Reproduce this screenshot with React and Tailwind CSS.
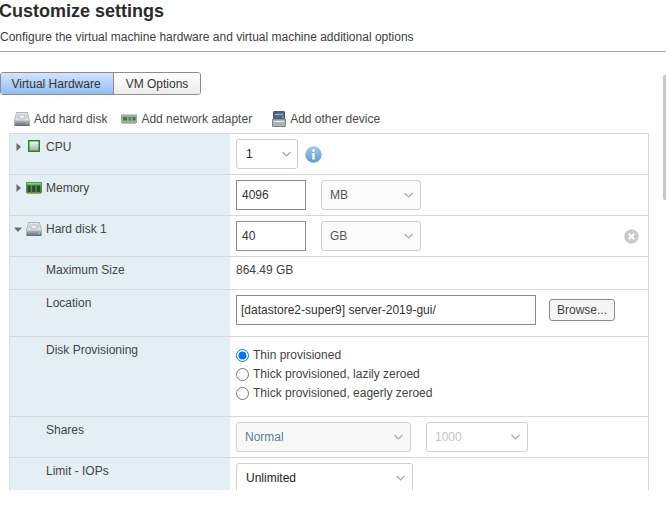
const F = { fontFamily: '"Liberation Sans", Arial, sans-serif' };

function Chevron() {
  return (
    <svg width="9" height="6" viewBox="0 0 9 6">
      <path d="M0.5 1 L4.5 5 L8.5 1" fill="none" stroke="#ababab" strokeWidth="1.2" />
    </svg>
  );
}

function Select({ w, text, textClass = "text-[#565656]", bg = "bg-white", pl = "pl-[8px]", pr = "pr-[7px]" }) {
  return (
    <div className={`${w} ${bg} ${pl} ${pr} h-[30px] shrink-0 border border-[#cfcfcf] rounded-[3px] flex items-center justify-between`}>
      <span className={textClass}>{text}</span>
      <Chevron />
    </div>
  );
}

function TextBox({ w, value, pl = "pl-[5px]" }) {
  return (
    <div className={`${w} ${pl} h-[30px] shrink-0 border border-[#8c8c8c] bg-white flex items-center text-[#333]`}>{value}</div>
  );
}

function DiskIcon({ id }) {
  return (
    <svg width="16" height="14" viewBox="0 0 16 14">
      <defs>
        <linearGradient id={id} x1="0" y1="0" x2="0" y2="1">
          <stop offset="0" stopColor="#aab2b8" />
          <stop offset="1" stopColor="#5f6a72" />
        </linearGradient>
      </defs>
      <path d="M2.6 0.5 H13.4 L15.6 9 H0.4 Z" fill="#e2e6e9" stroke="#8f989f" strokeWidth="0.7" />
      <ellipse cx="8" cy="4.8" rx="5.6" ry="3" fill="#c7ced3" />
      <ellipse cx="8" cy="4.8" rx="2.4" ry="1.2" fill="#eef1f3" />
      <rect x="0.3" y="9" width="15.4" height="5" rx="0.8" fill={`url(#${id})`} />
      <rect x="12" y="10.6" width="2" height="1.5" fill="#7fdc6a" />
    </svg>
  );
}

function NicIcon() {
  return (
    <svg width="16" height="10" viewBox="0 0 16 10">
      <rect x="0" y="0.5" width="16" height="8.5" fill="#8fb596" />
      <rect x="2" y="3" width="4" height="3.5" fill="#4f7059" />
      <rect x="7.5" y="3" width="2.5" height="3.5" fill="#5b7c63" />
      <rect x="11.5" y="3" width="3" height="3.5" fill="#4f7059" />
      <rect x="1" y="9" width="14" height="1" fill="#c8c08a" />
    </svg>
  );
}

function DeviceIcon() {
  return (
    <svg width="14" height="16" viewBox="0 0 14 16">
      <rect x="1.5" y="0.5" width="11" height="7.5" rx="0.6" fill="#4a6c8c" stroke="#2f4356" strokeWidth="0.8" />
      <rect x="3" y="3" width="8" height="1" fill="#9fb6ca" />
      <rect x="0.4" y="8" width="13.2" height="7.6" rx="0.8" fill="#aab3ba" stroke="#5a646c" strokeWidth="0.8" />
      <rect x="2" y="10" width="10" height="1" fill="#eef1f3" />
      <rect x="10" y="5.4" width="1.5" height="1.2" fill="#7fdc6a" />
      <rect x="10" y="12.6" width="1.5" height="1.2" fill="#7fdc6a" />
    </svg>
  );
}

function CpuIcon() {
  return (
    <svg width="12" height="12" viewBox="0 0 12 12">
      <defs>
        <linearGradient id="cpu" x1="0" y1="0" x2="0" y2="1">
          <stop offset="0" stopColor="#f5f6f5" />
          <stop offset="1" stopColor="#a9adaa" />
        </linearGradient>
      </defs>
      <rect x="0" y="0" width="12" height="12" fill="#1c8a2a" />
      <rect x="1.5" y="1.5" width="9" height="9" fill="url(#cpu)" />
    </svg>
  );
}

function MemIcon() {
  return (
    <svg width="16" height="12" viewBox="0 0 16 12">
      <rect x="0" y="0" width="16" height="11" fill="#4a9e42" />
      <rect x="1" y="1" width="14" height="1.5" fill="#8ccf78" />
      <rect x="1.5" y="3.5" width="3.2" height="6.5" fill="#39443b" />
      <rect x="6.2" y="3.5" width="3.2" height="6.5" fill="#39443b" />
      <rect x="10.8" y="3.5" width="3.4" height="6.5" fill="#39443b" />
      <rect x="1" y="11" width="14" height="1" fill="#b7a24f" />
    </svg>
  );
}

function ArrowRight() {
  return (
    <svg width="5" height="8" viewBox="0 0 5 8"><path d="M0.5 0 L5 4 L0.5 8 Z" fill="#6b6b6b" /></svg>
  );
}

function ArrowDown() {
  return (
    <svg width="8" height="5" viewBox="0 0 8 5"><path d="M0 0.5 H8 L4 5 Z" fill="#6b6b6b" /></svg>
  );
}

function Row({ h, label, lead = "w-[36px]", toggle, icon, children, last }) {
  return (
    <div className={`${h} flex ${last ? "" : "border-b border-[#d9d9d9]"} box-border`}>
      <div className="w-[220px] shrink-0 bg-[#e3eef5] flex items-start pt-[5px] text-[#444]">
        <div className={`${lead} shrink-0 h-[16px] flex items-center`}>
          {toggle === "down" && <span className="ml-[4px] flex mt-[1px]"><ArrowDown /></span>}
          {toggle === "right" && <span className="ml-[6px] flex"><ArrowRight /></span>}
        </div>
        {icon}
        <span className="leading-[16px]">{label}</span>
      </div>
      <div className="flex-1 min-w-0">{children}</div>
    </div>
  );
}

export default function App() {
  return (
    <div style={F} className="w-[666px] h-[513px] bg-white overflow-hidden relative text-[12px] text-[#333]">
      <div className="h-[51px] border-b border-[#a6a6a6] box-content">
        <h1 className="-ml-[1px] text-[18px] font-bold leading-[22px] text-[#2b2b2b]">Customize settings</h1>
        <p className="mt-[7px] leading-[16px] text-[#404040]">Configure the virtual machine hardware and virtual machine additional options</p>
      </div>

      <div className="mt-[20px] flex h-[23px] w-[201px] border border-[#8c8c8c] rounded-[3px] overflow-hidden">
        <div className="w-[113px] pr-[2px] border-r border-[#8c8c8c] bg-gradient-to-b from-[#d3e4fb] to-[#8fbdf6] flex items-center justify-center text-[#333]">Virtual Hardware</div>
        <div className="flex-1 bg-gradient-to-b from-white to-[#ececec] flex items-center justify-center text-[#333]">VM Options</div>
      </div>

      <div className="mt-[13px] h-[22px] pl-[14px] flex items-center text-[#4a4a4a]">
        <span className="mr-[4px] flex"><DiskIcon id="disk-add" /></span>
        <span>Add hard disk</span>
        <span className="ml-[14px] mr-[4px] flex"><NicIcon /></span>
        <span>Add network adapter</span>
        <span className="ml-[20px] mr-[4px] flex"><DeviceIcon /></span>
        <span>Add other device</span>
      </div>

      <div className="ml-[9px] mt-[3px] w-[640px] h-[357px] overflow-hidden border-t border-l border-r border-[#d9d9d9] box-border">
        <Row h="h-[41px]" label="CPU" toggle="right" lead="w-[18px]" icon={<span className="mr-[6px] mt-[1px] flex"><CpuIcon /></span>}>
          <div className="pt-[5px] pl-[6px] flex items-center">
            <Select w="w-[62px]" text="1" textClass="text-[#222]" pl="pl-[9px]" pr="pr-[6px]" />
            <svg width="17" height="17" viewBox="0 0 17 17" className="ml-[7px]">
              <defs>
                <linearGradient id="info" x1="0" y1="0" x2="0" y2="1">
                  <stop offset="0" stopColor="#a4c9ec" />
                  <stop offset="1" stopColor="#5b9ad6" />
                </linearGradient>
              </defs>
              <circle cx="8.5" cy="8.5" r="8.2" fill="url(#info)" />
              <circle cx="8.5" cy="4.6" r="1.4" fill="#fff" />
              <rect x="7.3" y="7" width="2.4" height="6.5" fill="#fff" />
            </svg>
          </div>
        </Row>
        <Row h="h-[41px]" label="Memory" toggle="right" lead="w-[16px]" icon={<span className="mr-[4px] mt-[2px] flex"><MemIcon /></span>}>
          <div className="pt-[5px] pl-[6px] flex items-center gap-[15px]">
            <TextBox w="w-[70px]" value="4096" />
            <Select w="w-[100px]" text="MB" bg="bg-[#fbfbfb]" />
          </div>
        </Row>
        <Row h="h-[41px]" label="Hard disk 1" toggle="down" lead="w-[16px]" icon={<span className="mr-[4px] mt-[1px] flex"><DiskIcon id="disk-row" /></span>}>
          <div className="pt-[5px] pl-[6px] flex items-center gap-[15px]">
            <TextBox w="w-[70px]" value="40" />
            <Select w="w-[100px]" text="GB" bg="bg-[#fbfbfb]" />
            <svg width="15" height="15" viewBox="0 0 15 15" className="ml-[188px]">
              <circle cx="7.5" cy="7.5" r="7.2" fill="#c9c9c9" />
              <path d="M4.7 4.7 L10.3 10.3 M10.3 4.7 L4.7 10.3" stroke="#fff" strokeWidth="2" />
            </svg>
          </div>
        </Row>
        <Row h="h-[33px]" label="Maximum Size">
          <div className="pl-[6px] pt-[5px] leading-[16px] text-[#444]">864.49 GB</div>
        </Row>
        <Row h="h-[47px]" label="Location">
          <div className="pt-[5px] pl-[6px] flex items-center">
            <TextBox w="w-[300px]" value="[datastore2-super9] server-2019-gui/" pl="pl-[4px]" />
            <div className="ml-[13px] w-[66px] h-[22px] border border-[#8c8c8c] rounded-[3px] bg-[#f5f5f5] flex items-center justify-center text-[#444]">Browse...</div>
          </div>
        </Row>
        <Row h="h-[80px]" label="Disk Provisioning">
          <div className="pt-[10px] pl-[6px] flex flex-col gap-[3px] text-[#444]">
            {["Thin provisioned", "Thick provisioned, lazily zeroed", "Thick provisioned, eagerly zeroed"].map((t, i) => (
              <label key={t} className="h-[16px] flex items-center">
                <input type="radio" name="prov" readOnly checked={i === 0} className="m-0 w-[13px] h-[13px]" />
                <span className="ml-[4px]">{t}</span>
              </label>
            ))}
          </div>
        </Row>
        <Row h="h-[41px]" label="Shares">
          <div className="pt-[5px] pl-[6px] flex items-center gap-[15px]">
            <Select w="w-[175px]" text="Normal" bg="bg-[#f8f8f8]" textClass="text-[#5d7a94]" />
            <Select w="w-[102px]" text="1000" textClass="text-[#c4c4c4]" />
          </div>
        </Row>
        <Row h="h-[41px]" label="Limit - IOPs" last>
          <div className="pt-[5px] pl-[6px] flex items-center">
            <Select w="w-[177px]" text="Unlimited" textClass="text-[#222]" pl="pl-[9px]" />
          </div>
        </Row>
      </div>

      <div className="absolute right-0 top-[75px] w-[3px] h-[125px] bg-[#c8c8c8] rounded-l-[2px]" />
    </div>
  );
}
